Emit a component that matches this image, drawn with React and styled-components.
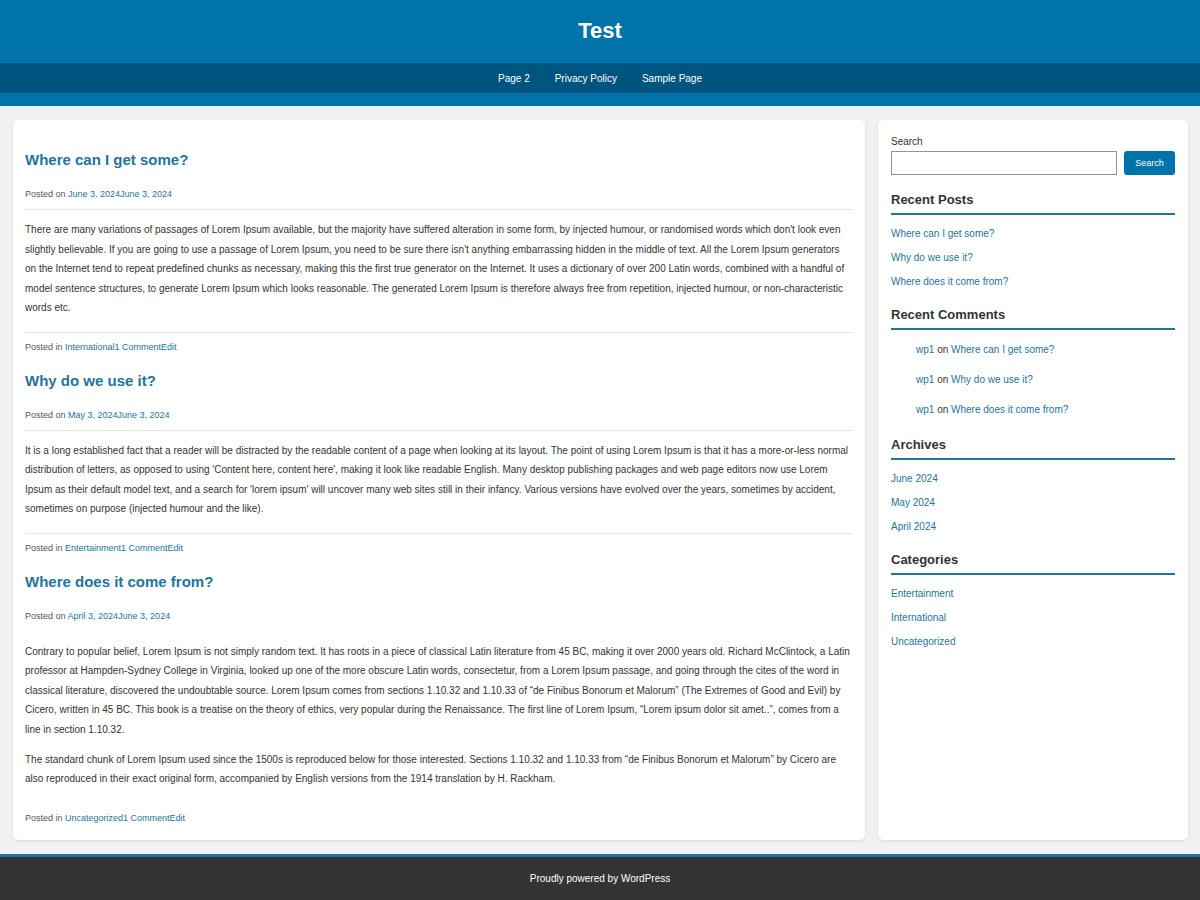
import styled, { createGlobalStyle } from "styled-components";

const posts = [
  {
    title: "Where can I get some?",
    posted: "June 3, 2024",
    category: "International",
    body: [
      "There are many variations of passages of Lorem Ipsum available, but the majority have suffered alteration in some form, by injected humour, or randomised words which don't look even slightly believable. If you are going to use a passage of Lorem Ipsum, you need to be sure there isn't anything embarrassing hidden in the middle of text. All the Lorem Ipsum generators on the Internet tend to repeat predefined chunks as necessary, making this the first true generator on the Internet. It uses a dictionary of over 200 Latin words, combined with a handful of model sentence structures, to generate Lorem Ipsum which looks reasonable. The generated Lorem Ipsum is therefore always free from repetition, injected humour, or non-characteristic words etc.",
    ],
  },
  {
    title: "Why do we use it?",
    posted: "May 3, 2024",
    category: "Entertainment",
    body: [
      "It is a long established fact that a reader will be distracted by the readable content of a page when looking at its layout. The point of using Lorem Ipsum is that it has a more-or-less normal distribution of letters, as opposed to using 'Content here, content here', making it look like readable English. Many desktop publishing packages and web page editors now use Lorem Ipsum as their default model text, and a search for 'lorem ipsum' will uncover many web sites still in their infancy. Various versions have evolved over the years, sometimes by accident, sometimes on purpose (injected humour and the like).",
    ],
  },
  {
    title: "Where does it come from?",
    posted: "April 3, 2024",
    category: "Uncategorized",
    plain: true,
    body: [
      "Contrary to popular belief, Lorem Ipsum is not simply random text. It has roots in a piece of classical Latin literature from 45 BC, making it over 2000 years old. Richard McClintock, a Latin professor at Hampden-Sydney College in Virginia, looked up one of the more obscure Latin words, consectetur, from a Lorem Ipsum passage, and going through the cites of the word in classical literature, discovered the undoubtable source. Lorem Ipsum comes from sections 1.10.32 and 1.10.33 of \u201cde Finibus Bonorum et Malorum\u201d (The Extremes of Good and Evil) by Cicero, written in 45 BC. This book is a treatise on the theory of ethics, very popular during the Renaissance. The first line of Lorem Ipsum, \u201cLorem ipsum dolor sit amet..\u201d, comes from a line in section 1.10.32.",
      "The standard chunk of Lorem Ipsum used since the 1500s is reproduced below for those interested. Sections 1.10.32 and 1.10.33 from \u201cde Finibus Bonorum et Malorum\u201d by Cicero are also reproduced in their exact original form, accompanied by English versions from the 1914 translation by H. Rackham.",
    ],
  },
];

const widgets = [
  { title: "Recent Posts", items: posts.map((p) => p.title) },
  { title: "Archives", items: ["June 2024", "May 2024", "April 2024"] },
  { title: "Categories", items: ["Entertainment", "International", "Uncategorized"] },
];

const App = () => {
  return (
    <>
      <GlobalStyle />
      <Header>
        <SiteTitle>Test</SiteTitle>
        <Nav>
          <a>Page 2</a>
          <a>Privacy Policy</a>
          <a>Sample Page</a>
        </Nav>
      </Header>

      <Layout>
        <Main>
          {posts.map((post) => (
            <Article key={post.title}>
              <PostHeader plain={post.plain}>
                <PostTitle>{post.title}</PostTitle>
                <Meta>
                  Posted on <a>{post.posted}</a>
                  <a>June 3, 2024</a>
                </Meta>
              </PostHeader>
              <Content plain={post.plain}>
                {post.body.map((p, i) => (
                  <p key={i}>{p}</p>
                ))}
              </Content>
              <Meta>
                Posted in <a>{post.category}</a>
                <a>1 Comment</a>
                <a>Edit</a>
              </Meta>
            </Article>
          ))}
        </Main>

        <Sidebar>
          <SearchForm>
            <label>Search</label>
            <SearchRow>
              <SearchInput type="text" />
              <SearchButton>Search</SearchButton>
            </SearchRow>
          </SearchForm>

          <Widget>
            <WidgetTitle>{widgets[0].title}</WidgetTitle>
            <List>
              {widgets[0].items.map((item) => (
                <li key={item}>
                  <a>{item}</a>
                </li>
              ))}
            </List>
          </Widget>

          <Widget>
            <WidgetTitle>Recent Comments</WidgetTitle>
            <List comments>
              {posts.map((p) => (
                <li key={p.title}>
                  <a>wp1</a> on <a>{p.title}</a>
                </li>
              ))}
            </List>
          </Widget>

          {widgets.slice(1).map((w) => (
            <Widget key={w.title}>
              <WidgetTitle>{w.title}</WidgetTitle>
              <List>
                {w.items.map((item) => (
                  <li key={item}>
                    <a>{item}</a>
                  </li>
                ))}
              </List>
            </Widget>
          ))}
        </Sidebar>
      </Layout>

      <Footer>Proudly powered by WordPress</Footer>
    </>
  );
};

export default App;

const GlobalStyle = createGlobalStyle`
  * {
    box-sizing: border-box;
  }
  body {
    margin: 0;
    background: #f1f1f1;
    font-family: "Liberation Sans", Arial, sans-serif;
    color: #333;
  }
  a {
    color: #21759b;
    text-decoration: none;
    cursor: pointer;
  }
`;

const Header = styled.header`
  background: #0073aa;
  padding-bottom: 13px;
  text-align: center;
`;

const SiteTitle = styled.h1`
  margin: 0;
  height: 63px;
  padding-bottom: 2px;
  display: flex;
  align-items: center;
  justify-content: center;
  font-size: 22px;
  font-weight: 700;
  color: #fff;
`;

const Nav = styled.nav`
  background: #005580;
  height: 30px;
  display: flex;
  align-items: center;
  justify-content: center;
  gap: 25px;

  a {
    color: #fff;
    font-size: 10px;
  }
`;

const Layout = styled.div`
  display: grid;
  grid-template-columns: 1fr 310px;
  gap: 13px;
  padding: 14px 12px 14px 13px;
`;

const Card = styled.div`
  background: #fff;
  border-radius: 5px;
  box-shadow: 0 1px 3px rgba(0, 0, 0, 0.1);
`;

const Main = styled(Card)`
  padding: 13px 12px 15px;
`;

const Article = styled.article`
  padding-top: 18px;
`;

const PostHeader = styled.div`
  padding-bottom: 8px;
  border-bottom: 1px solid ${(p) => (p.plain ? "transparent" : "#e6e6e6")};
`;

const PostTitle = styled.h2`
  margin: 0 0 18px;
  font-size: 15px;
  line-height: 18px;
  font-weight: 700;
  color: #21759b;
`;

const Meta = styled.div`
  font-size: 9px;
  line-height: 14px;
  color: #555;
`;

const Content = styled.div`
  margin: 10px 0 7px;
  padding-bottom: 14px;
  border-bottom: 1px solid ${(p) => (p.plain ? "transparent" : "#e6e6e6")};

  p {
    margin: 0 0 10.5px;
    font-size: 10px;
    line-height: 19.5px;
    color: #333;
  }
  p:last-child {
    margin-bottom: 0;
  }
`;

const Sidebar = styled(Card)`
  padding: 15px 13px 14px;
  display: flex;
  flex-direction: column;
  gap: 18px;
`;

const SearchForm = styled.form`
  display: flex;
  flex-direction: column;
  gap: 2px;
  margin-bottom: -1px;

  label {
    font-size: 10px;
    line-height: 14px;
    color: #333;
  }
`;

const SearchRow = styled.div`
  display: flex;
  gap: 7px;
`;

const SearchInput = styled.input`
  flex: 1;
  height: 24px;
  border: 1px solid #949494;
  border-radius: 0;
  padding: 0 6px;
`;

const SearchButton = styled.button`
  width: 51px;
  height: 24px;
  border: none;
  border-radius: 3px;
  background: #0073aa;
  color: #fff;
  font-family: "Liberation Sans", Arial, sans-serif;
  font-size: 9px;
`;

const Widget = styled.section``;

const WidgetTitle = styled.h3`
  margin: 0;
  padding-bottom: 5px;
  border-bottom: 2px solid #21759b;
  font-size: 13px;
  line-height: 16px;
  font-weight: 700;
  color: #333;
`;

const List = styled.ul`
  list-style: none;
  margin: ${(p) => (p.comments ? "13px 0 0" : "12px 0 0")};
  padding: ${(p) => (p.comments ? "0 0 2px 25px" : "0")};
  display: flex;
  flex-direction: column;
  gap: ${(p) => (p.comments ? "16px" : "10px")};

  li {
    font-size: 10px;
    line-height: 14px;
    color: #333;
  }
`;

const Footer = styled.footer`
  border-top: 3px solid #21759b;
  background: #333;
  color: #fff;
  text-align: center;
  font-size: 10px;
  line-height: 14px;
  padding: 15px 0;
`;
